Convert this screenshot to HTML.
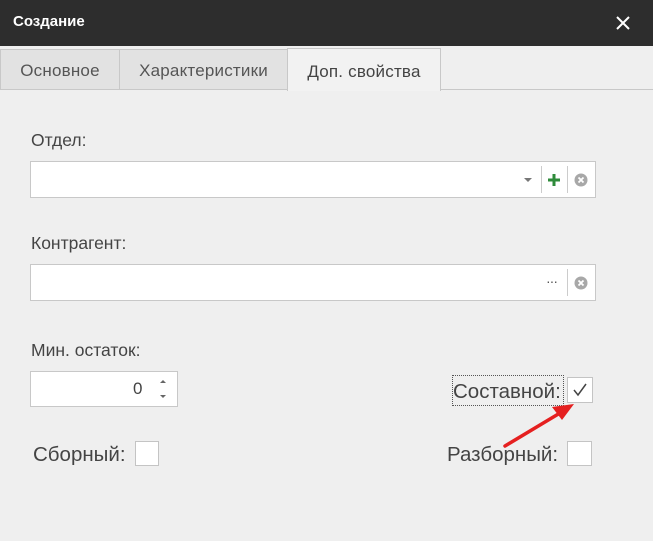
<!DOCTYPE html>
<html><head><meta charset="utf-8"><style>
*{margin:0;padding:0;box-sizing:border-box}
body{width:653px;height:541px;background:#efefef;font-family:"Liberation Sans","DejaVu Sans",sans-serif;position:relative;overflow:hidden;color:#444}
.a{position:absolute}
.title{left:0;top:0;width:653px;height:46px;background:#2d2d2d;color:#fff;font-size:15px;font-weight:bold;line-height:44px;padding-left:13px}
.tab{top:49px;height:41px;background:#e2e2e2;border:1px solid #c8c8c8;font-size:17px;color:#555;text-align:center;line-height:42px;letter-spacing:0.2px}
.lbl{font-size:17.5px;color:#444}
.fld{background:#fff;border:1px solid #c8c8c8}
.cb{background:#fff;border:1px solid #c4c4c4}
.div{width:1px;background:#ccc}
.big{font-size:20.5px;color:#444}
</style></head><body>
<div class="a title">Создание</div>
<svg class="a" style="left:616px;top:16px" width="14" height="14"><path d="M1 1l12 12M13 1L1 13" stroke="#fff" stroke-width="2"/></svg>
<div class="a" style="left:0;top:89px;width:653px;height:1px;background:#c8c8c8"></div>
<div class="a tab" style="left:0;width:120px">Основное</div>
<div class="a tab" style="left:119px;width:169px">Характеристики</div>
<div class="a tab" style="left:287px;top:48px;height:43px;width:154px;background:#f2f2f2;border-bottom:none;color:#444;line-height:46px">Доп. свойства</div>

<div class="a lbl" style="left:31px;top:130px">Отдел:</div>
<div class="a fld" style="left:30px;top:161px;width:566px;height:37px"></div>
<svg class="a" style="left:523px;top:177px" width="10" height="6"><path d="M1 1h8l-4 4z" fill="#777"/></svg>
<div class="a div" style="left:541px;top:166px;height:27px"></div>
<svg class="a" style="left:547px;top:173px" width="14" height="14"><path d="M7 1v12M1 7h12" stroke="#2e8b3a" stroke-width="3"/></svg>
<div class="a div" style="left:567px;top:166px;height:27px"></div>
<svg class="a" style="left:574px;top:173px" width="14" height="14"><circle cx="7" cy="7" r="6.5" fill="#a8a8a8"/><path d="M4.5 4.5l5 5M9.5 4.5l-5 5" stroke="#fff" stroke-width="1.8"/></svg>

<div class="a lbl" style="left:31px;top:233px">Контрагент:</div>
<div class="a fld" style="left:30px;top:264px;width:566px;height:37px"></div>
<div class="a" style="left:546px;top:273px;font-size:14px;color:#555;letter-spacing:-1px">···</div>
<div class="a div" style="left:567px;top:269px;height:27px"></div>
<svg class="a" style="left:574px;top:276px" width="14" height="14"><circle cx="7" cy="7" r="6.5" fill="#a8a8a8"/><path d="M4.5 4.5l5 5M9.5 4.5l-5 5" stroke="#fff" stroke-width="1.8"/></svg>

<div class="a lbl" style="left:31px;top:340px">Мин. остаток:</div>
<div class="a fld" style="left:30px;top:371px;width:148px;height:36px"></div>
<div class="a" style="left:133px;top:379px;font-size:17px;color:#444">0</div>
<svg class="a" style="left:158px;top:378px" width="10" height="22"><path d="M2 5l3-3 3 3z" fill="#666"/><path d="M2 17l3 3 3-3z" fill="#666"/></svg>

<div class="a" style="left:452px;top:375px;width:112px;height:31px;border:1px dotted #555"></div>
<div class="a big" style="left:453px;top:380px">Составной:</div>
<div class="a cb" style="left:567px;top:377px;width:26px;height:26px"></div>
<svg class="a" style="left:572px;top:382px" width="16" height="16"><path d="M2 8l4 5 8-11" stroke="#444" stroke-width="1.5" fill="none"/></svg>

<div class="a big" style="left:33px;top:443px">Сборный:</div>
<div class="a cb" style="left:135px;top:441px;width:24px;height:25px"></div>
<div class="a big" style="left:447px;top:443px">Разборный:</div>
<div class="a cb" style="left:567px;top:441px;width:25px;height:25px"></div>

<svg class="a" style="left:0;top:0" width="653" height="541"><path d="M505 446L560 413" stroke="#e52020" stroke-width="3.5" stroke-linecap="round"/><path d="M574 404L552 407 562 420z" fill="#e52020"/></svg>
</body></html>
